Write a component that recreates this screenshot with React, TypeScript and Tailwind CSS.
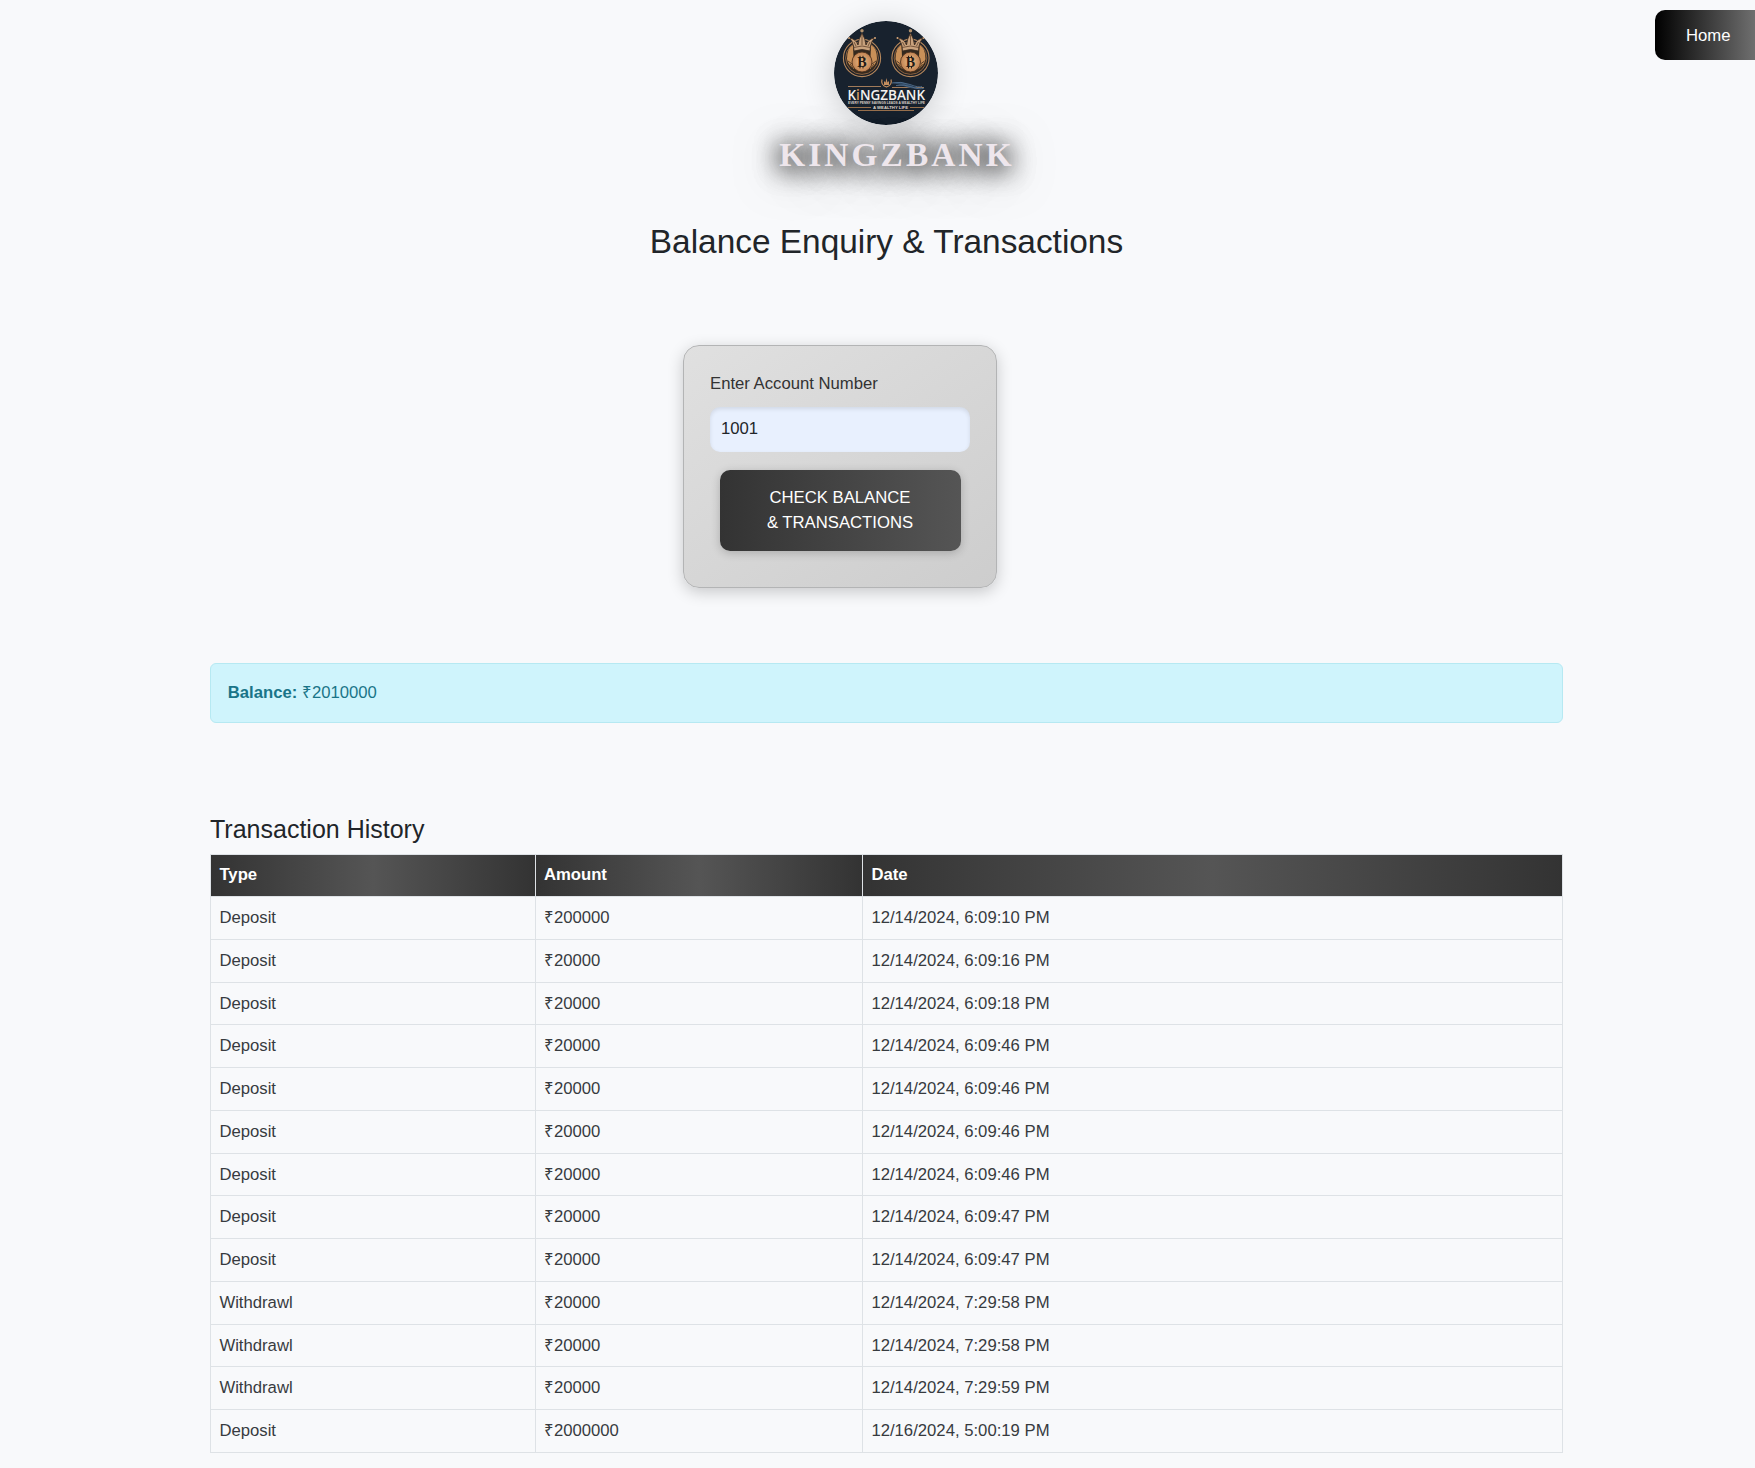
type Transaction = { type: string; amount: string; date: string };

const transactions: Transaction[] = [
  { type: 'Deposit', amount: '₹200000', date: '12/14/2024, 6:09:10 PM' },
  { type: 'Deposit', amount: '₹20000', date: '12/14/2024, 6:09:16 PM' },
  { type: 'Deposit', amount: '₹20000', date: '12/14/2024, 6:09:18 PM' },
  { type: 'Deposit', amount: '₹20000', date: '12/14/2024, 6:09:46 PM' },
  { type: 'Deposit', amount: '₹20000', date: '12/14/2024, 6:09:46 PM' },
  { type: 'Deposit', amount: '₹20000', date: '12/14/2024, 6:09:46 PM' },
  { type: 'Deposit', amount: '₹20000', date: '12/14/2024, 6:09:46 PM' },
  { type: 'Deposit', amount: '₹20000', date: '12/14/2024, 6:09:47 PM' },
  { type: 'Deposit', amount: '₹20000', date: '12/14/2024, 6:09:47 PM' },
  { type: 'Withdrawl', amount: '₹20000', date: '12/14/2024, 7:29:58 PM' },
  { type: 'Withdrawl', amount: '₹20000', date: '12/14/2024, 7:29:58 PM' },
  { type: 'Withdrawl', amount: '₹20000', date: '12/14/2024, 7:29:59 PM' },
  { type: 'Deposit', amount: '₹2000000', date: '12/16/2024, 5:00:19 PM' },
];

function Coin({ x }: { x: number }) {
  return (
    <g transform={`translate(${x} 0)`}>
      <circle cx="0" cy="37" r="18.6" fill="#1b2028" stroke="#b5875c" strokeWidth="1.1" />
      <circle cx="0" cy="37" r="16.4" fill="#33291f" stroke="#8a6140" strokeWidth="1" />
      <path d="M-15 38 Q-15 27 -9 24 L-8 48 Q-14 44 -15 38Z M15 38 Q15 27 9 24 L8 48 Q14 44 15 38Z" fill="#c99058" />
      <path d="M-12 43 L-9 47 M-14 40 L-10 43 M12 43 L9 47 M14 40 L10 43" stroke="#3a2a1e" strokeWidth="0.8" />
      <path d="M-8 30 L-8.500 25 Q-9.500 20 -12.500 17 Q-6 18 -4 24 Q-3.500 18 0 12 Q3.500 18 4 24 Q6 18 12.500 17 Q9.500 20 8.500 25 L8 30 Q0 27 -8 30Z" fill="#c9a27d" stroke="#3d2c21" strokeWidth="0.8" />
      <path d="M-8.500 26.500 Q0 23.500 8.500 26.500 M0 14 V24 M-8 21 L-6 25 M8 21 L6 25" fill="none" stroke="#5f412b" strokeWidth="0.8" />
      <circle cx="0" cy="9.700" r="1.700" fill="#b4936f" />
      <circle cx="-13" cy="17" r="1" fill="#d6a77b" />
      <circle cx="13" cy="17" r="1" fill="#d6a77b" />
      <circle cx="0" cy="41" r="10" fill="url(#coin)" stroke="#50331f" strokeWidth="0.9" />
      <text x="0" y="45.800" textAnchor="middle" fontFamily="Liberation Serif, serif" fontWeight="bold" fontSize="14" fill="#231a15">B</text>
      <path d="M-2 34.800 V37 M1 34.800 V37 M-2 45 V47.400 M1 45 V47.400" stroke="#231a15" strokeWidth="1" />
    </g>
  );
}

function Logo() {
  return (
    <svg viewBox="0 0 104 104" className="-ml-px size-[104px] rounded-full shadow-[0_4px_32px_rgba(0,0,0,0.18)]">
      <defs>
        <radialGradient id="coin">
          <stop offset="0" stopColor="#eebd88" />
          <stop offset="1" stopColor="#c08252" />
        </radialGradient>
        <clipPath id="disc"><circle cx="52" cy="52" r="52" /></clipPath>
      </defs>
      <g clipPath="url(#disc)">
        <rect width="104" height="104" fill="#18222e" />
        <Coin x={28} />
        <Coin x={76.500} />
        <path d="M14 65.500 H47 M58 66.500 H90" stroke="#b18660" strokeWidth="0.9" />
        <path d="M58 61.500 Q67 59.500 76 64 T88 66 Q82 69 74 66.500 T58 61.500Z" fill="#304860" />
        <path d="M58 62 Q67 60 76 63.500 T88 65.500 M62 64.500 Q70 63 78 66 T90 67" fill="none" stroke="#57779a" strokeWidth="0.8" />
        <path d="M48 58.500 Q46.500 64 52.500 66 Q58.500 64 57 58.500" fill="none" stroke="#c58f5f" strokeWidth="1.200" />
        <path d="M50 64 V60 L51.500 61.500 L52.500 57 L53.500 61.500 L55 60 V64Z" fill="#c58f5f" />
        <text x="13.500" y="79.200" textLength="77.500" lengthAdjust="spacingAndGlyphs" fontFamily="Open Sans, sans-serif" fontWeight="600" fontSize="14" fill="#f3f1ef">
          K<tspan fill="#d49b62">i</tspan>NGZBANK
        </text>
        <text x="14" y="83.400" textLength="77" lengthAdjust="spacingAndGlyphs" fontFamily="Liberation Sans, sans-serif" fontWeight="bold" fontSize="3.200" fill="#d8d0c8">EVERY PENNY SAVINGS LEADS A WEALTHY LIFE</text>
        <text x="39" y="88" textLength="35" lengthAdjust="spacingAndGlyphs" fontFamily="Liberation Sans, sans-serif" fontWeight="bold" fontSize="4.400" fill="#e2dad2">A WEALTHY LIFE</text>
        <path d="M14 86.500 H37 M76 86.500 H90 M24 89.500 H80" stroke="#a87a52" strokeWidth="0.9" />
      </g>
    </svg>
  );
}

const headCell =
  'border border-[#dee2e6] bg-[linear-gradient(90deg,#333,#555,#333)] bg-clip-padding px-[8.4px] pt-0 pb-[1px] text-left font-bold text-white';
const bodyCell = 'border border-[#dee2e6] px-[8.4px] pt-0 pb-[1px]';

export default function App() {
  return (
    <div className="relative h-[1468px] w-full overflow-hidden bg-[#f8f9fb] font-['Liberation_Sans',Arial,sans-serif] text-[16.7px] leading-[25px] text-[#212529]">
      <button className="absolute top-[10px] left-[1655px] h-[50px] w-[130px] rounded-[10px] bg-[linear-gradient(90deg,#000,#909090)] pl-[31px] text-left text-white">
        Home
      </button>

      <main className="ml-[210px] flex w-[1353px] flex-col pt-[21px]">
        <header className="flex flex-col items-center">
          <Logo />
          <div className="ml-[21px] mt-[10px] font-['Liberation_Serif',serif] text-[33.4px] leading-[40px] font-bold tracking-[3.1px] text-[#eee6ec] [text-shadow:0_2px_26px_rgba(0,0,0,0.9),0_2px_26px_rgba(0,0,0,0.8),0_6px_46px_rgba(0,0,0,0.5)]">
            KINGZBANK
          </div>
          <h1 className="mt-[47px] text-[33.4px] leading-[40px] font-normal">Balance Enquiry &amp; Transactions</h1>
        </header>

        <form className="mt-[83px] ml-[473px] h-[243px] w-[314px] rounded-[16px] border border-[#b3b4b5] bg-[linear-gradient(145deg,#e0e0e0,#cdcdcd)] px-[26px] pt-[25px] shadow-[0_4px_16px_rgba(0,0,0,0.2)]">
          <label className="block text-[#333]">Enter Account Number</label>
          <input
            readOnly
            value="1001"
            className="mt-[11px] block h-[45px] w-[260px] rounded-[10px] bg-[#e8f0fe] px-[11px] pb-[2px] shadow-[inset_0_2px_4px_rgba(0,0,0,0.1)] outline-none"
          />
          <button
            type="button"
            className="mt-[18px] ml-[10px] block h-[81px] w-[241px] rounded-[10px] bg-[linear-gradient(90deg,#333,#555)] pr-[1px] pb-[2px] text-white shadow-[0_2px_10px_rgba(0,0,0,0.2)]"
          >
            CHECK BALANCE
            <br />
            &amp; TRANSACTIONS
          </button>
        </form>

        <div className="mt-[75px] h-[60px] rounded-[6px] border border-[#b6e9f2] bg-[#cff4fc] px-[16.7px] pt-[16px] text-[#1a7488]">
          <strong>Balance:</strong> ₹2010000
        </div>

        <h2 className="mt-[91px] text-[25px] leading-[30px] font-normal">Transaction History</h2>
        <table className="mt-[9.500px] w-[1353px] table-fixed border-collapse text-[#373b3f]">
          <colgroup>
            <col className="w-[324.5px]" />
            <col className="w-[327.5px]" />
            <col />
          </colgroup>
          <thead>
            <tr className="h-[42.7px]">
              <th className={headCell}>Type</th>
              <th className={headCell}>Amount</th>
              <th className={headCell}>Date</th>
            </tr>
          </thead>
          <tbody>
            {transactions.map((t, i) => (
              <tr key={i} className="h-[42.75px]">
                <td className={bodyCell}>{t.type}</td>
                <td className={bodyCell}>{t.amount}</td>
                <td className={bodyCell}>{t.date}</td>
              </tr>
            ))}
          </tbody>
        </table>
      </main>
    </div>
  );
}
